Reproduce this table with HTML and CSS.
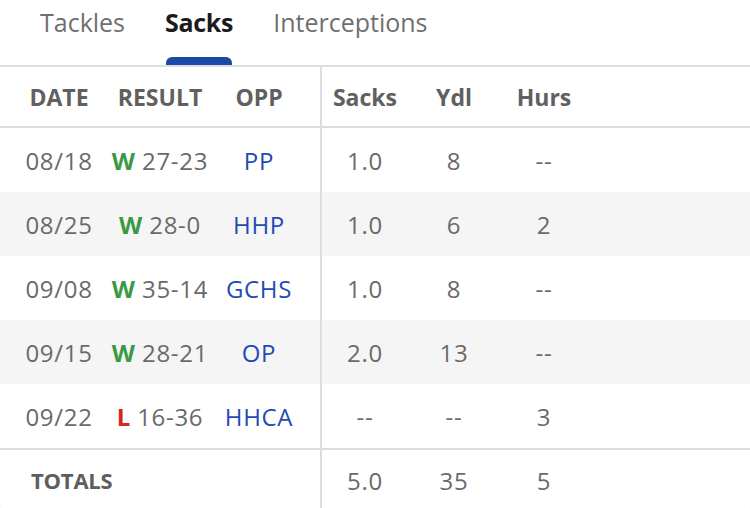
FILE: index.html
```html
<!DOCTYPE html>
<html>
<head>
<meta charset="utf-8">
<link rel="stylesheet" href="styles.css">
</head>
<body>
<div class="card">
  <nav class="tabs">
    <span class="tab">Tackles</span>
    <span class="tab active">Sacks</span>
    <span class="tab">Interceptions</span>
  </nav>
  <div class="row head">
    <div class="left">
      <span>DATE</span><span>RESULT</span><span>OPP</span>
    </div>
    <div class="right">
      <span>Sacks</span><span>Ydl</span><span>Hurs</span>
    </div>
  </div>
  <div class="row">
    <div class="left">
      <span>08/18</span><span><b class="w">W</b> 27-23</span><span class="opp">PP</span>
    </div>
    <div class="right"><span>1.0</span><span>8</span><span>--</span></div>
  </div>
  <div class="row alt">
    <div class="left">
      <span>08/25</span><span><b class="w">W</b> 28-0</span><span class="opp">HHP</span>
    </div>
    <div class="right"><span>1.0</span><span>6</span><span>2</span></div>
  </div>
  <div class="row">
    <div class="left">
      <span>09/08</span><span><b class="w">W</b> 35-14</span><span class="opp">GCHS</span>
    </div>
    <div class="right"><span>1.0</span><span>8</span><span>--</span></div>
  </div>
  <div class="row alt">
    <div class="left">
      <span>09/15</span><span><b class="w">W</b> 28-21</span><span class="opp">OP</span>
    </div>
    <div class="right"><span>2.0</span><span>13</span><span>--</span></div>
  </div>
  <div class="row">
    <div class="left">
      <span>09/22</span><span><b class="l">L</b> 16-36</span><span class="opp">HHCA</span>
    </div>
    <div class="right"><span>--</span><span>--</span><span>3</span></div>
  </div>
  <div class="row totals">
    <div class="left"><span class="tot">TOTALS</span></div>
    <div class="right"><span>5.0</span><span>35</span><span>5</span></div>
  </div>
</div>
</body>
</html>
```
FILE: styles.css
```css
html, body {
  margin: 0;
  padding: 0;
}
body {
  background: #f1f1f1;
  font-family: "Open Sans", "Noto Sans", sans-serif;
  width: 750px;
  height: 508px;
  overflow: hidden;
}
.card {
  background: #fff;
  border-radius: 0 0 16px 16px;
  height: 520px;
}
.tabs {
  display: flex;
  height: 65px;
  border-bottom: 2px solid #dddddd;
  padding-left: 40px;
  gap: 40px;
}
.tab {
  position: relative;
  font-size: 25px;
  color: #6f6f6f;
  line-height: 44px;
}
.tab.active {
  font-weight: 700;
  color: #1b1b1b;
  letter-spacing: -0.3px;
}
.tab.active::after {
  content: "";
  position: absolute;
  left: 1px;
  right: 1px;
  bottom: 0;
  height: 8px;
  background: #1c48a8;
  border-radius: 6px 6px 0 0;
}
.row {
  display: flex;
  height: 64px;
  align-items: stretch;
  font-size: 24px;
  letter-spacing: 0.7px;
  color: #6a6a6a;
}
.row.alt {
  background: #f5f5f5;
}
.row.head {
  height: 59px;
  border-bottom: 2px solid #dddddd;
  font-weight: 700;
  font-size: 23px;
  letter-spacing: 0;
  color: #606060;
}
.row.totals {
  border-top: 2px solid #dddddd;
  height: 60px;
}
.left {
  width: 322px;
  box-sizing: border-box;
  border-right: 2px solid #dddddd;
  padding-left: 18px;
  display: grid;
  grid-template-columns: 82px 120px 78px;
  align-items: center;
}
.right {
  display: grid;
  grid-template-columns: 86px 92px 88px;
  align-items: center;
}
.left span, .right span {
  text-align: center;
  white-space: nowrap;
}
.w {
  color: #3a9a44;
  font-weight: 700;
  letter-spacing: 0;
}
.l {
  color: #d2281d;
  font-weight: 700;
  letter-spacing: 0;
}
.opp {
  color: #1f4bb5;
}
.tot {
  grid-column: 1 / 3;
  text-align: left !important;
  padding-left: 13px;
  font-weight: 700;
  font-size: 22px;
  color: #5e5e5e;
  letter-spacing: -0.2px;
}
```
